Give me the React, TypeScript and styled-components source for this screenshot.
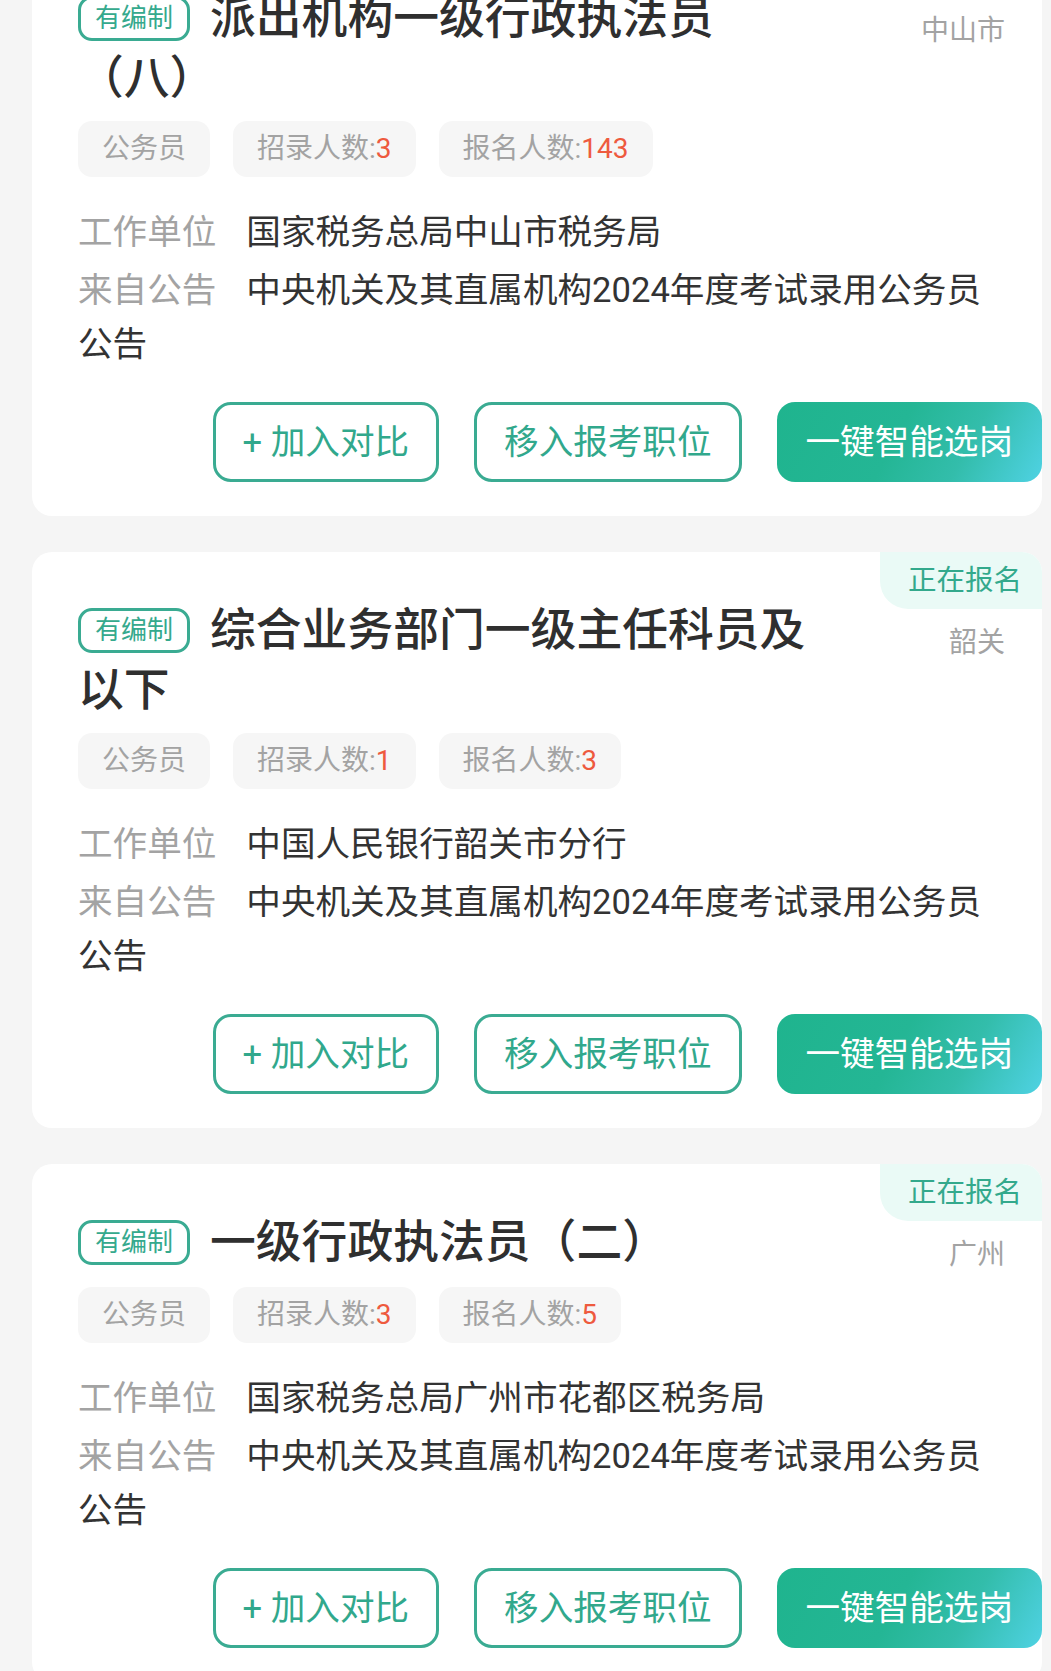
import React from 'react';
import styled, { createGlobalStyle } from 'styled-components';

const GlobalStyle = createGlobalStyle`
  html, body {
    margin: 0;
    padding: 0;
    background: #f5f5f5;
  }
  body {
    font-family: Roboto, 'Noto Sans CJK SC', 'Noto Sans', sans-serif;
    color: #333;
    overflow: hidden;
    text-spacing-trim: space-all;
  }
  * {
    box-sizing: border-box;
  }
`;

const List = styled.main`
  display: flex;
  flex-direction: column;
  gap: 36px;
  margin-top: -60px;
  padding: 0 9px 0 32px;
`;

const Card = styled.section`
  position: relative;
  background: #fff;
  border-radius: 20px;
  padding: 49px 0 34px 46px;
`;

const Status = styled.div`
  position: absolute;
  top: 0;
  right: 0;
  height: 57px;
  padding: 0 20px 0 28px;
  background: #eafaf6;
  border-radius: 0 20px 0 28px;
  color: #33a98c;
  font-size: 28.5px;
  line-height: 57px;
`;

const Header = styled.div`
  display: flex;
  align-items: flex-start;
  padding-right: 37px;
`;

const Title = styled.h2`
  flex: 1;
  max-width: 760px;
  margin: 0;
  font-size: 45.8px;
  line-height: 60px;
  font-weight: 500;
  color: #2f2f2f;
`;

const Tag = styled.span`
  display: inline-block;
  vertical-align: top;
  margin: 7px 20px 0 0;
  padding: 0 14px;
  border: 3px solid #3aab92;
  border-radius: 14px;
  color: #35a98d;
  font-size: 26px;
  line-height: 39px;
  font-weight: 400;
`;

const Location = styled.span`
  margin-left: auto;
  margin-top: 22px;
  white-space: nowrap;
  color: #a3a3a3;
  font-size: 28px;
  line-height: 40px;
`;

const Chips = styled.div`
  display: flex;
  gap: 23px;
  margin-top: 12px;
`;

const Chip = styled.span`
  height: 56px;
  padding: 0 24px;
  background: #f6f6f6;
  border-radius: 14px;
  color: #a3a3a3;
  font-size: 28px;
  line-height: 56px;
  white-space: nowrap;
`;

const Count = styled.span`
  color: #ee5a3e;
`;

const Info = styled.div`
  display: flex;
  flex-direction: column;
  gap: 4px;
  margin-top: 28px;
  padding-right: 37px;
`;

const InfoRow = styled.p`
  margin: 0;
  font-size: 34.6px;
  line-height: 54px;
  color: #333;
`;

const Label = styled.span`
  margin-right: 30px;
  color: #a3a3a3;
`;

const Actions = styled.div`
  display: flex;
  justify-content: flex-end;
  gap: 35px;
  margin-top: 31px;
`;

const Button = styled.button<{ $primary?: boolean }>`
  height: 80px;
  padding: 0 ${({ $primary }) => ($primary ? 29 : 27)}px;
  border: ${({ $primary }) => ($primary ? 'none' : '3px solid #3aab92')};
  border-radius: 18px;
  background: ${({ $primary }) =>
    $primary
      ? 'linear-gradient(118deg, #1fb48e 0%, #24b695 45%, #33bdab 70%, #4fd2e3 100%)'
      : '#fff'};
  color: ${({ $primary }) => ($primary ? '#fff' : '#31a88c')};
  font-family: inherit;
  font-size: 34.6px;
  line-height: 1;
  white-space: nowrap;
`;

type Job = {
  title: string;
  location: string;
  recruit: number;
  applied: number;
  unit: string;
  notice: string;
};

// \u200b lets the bracketed suffix wrap on its own, like the app does
const jobs: Job[] = [
  {
    title: '派出机构一级行政执法员\u200b（八）',
    location: '中山市',
    recruit: 3,
    applied: 143,
    unit: '国家税务总局中山市税务局',
    notice: '中央机关及其直属机构2024年度考试录用公务员公告',
  },
  {
    title: '综合业务部门一级主任科员及以下',
    location: '韶关',
    recruit: 1,
    applied: 3,
    unit: '中国人民银行韶关市分行',
    notice: '中央机关及其直属机构2024年度考试录用公务员公告',
  },
  {
    title: '一级行政执法员（二）',
    location: '广州',
    recruit: 3,
    applied: 5,
    unit: '国家税务总局广州市花都区税务局',
    notice: '中央机关及其直属机构2024年度考试录用公务员公告',
  },
];

function JobCard({ job }: { job: Job }): JSX.Element {
  return (
    <Card>
      <Status>正在报名</Status>
      <Header>
        <Title>
          <Tag>有编制</Tag>
          {job.title}
        </Title>
        <Location>{job.location}</Location>
      </Header>
      <Chips>
        <Chip>公务员</Chip>
        <Chip>
          招录人数:<Count>{job.recruit}</Count>
        </Chip>
        <Chip>
          报名人数:<Count>{job.applied}</Count>
        </Chip>
      </Chips>
      <Info>
        <InfoRow>
          <Label>工作单位</Label>
          {job.unit}
        </InfoRow>
        <InfoRow>
          <Label>来自公告</Label>
          {job.notice}
        </InfoRow>
      </Info>
      <Actions>
        <Button>+ 加入对比</Button>
        <Button>移入报考职位</Button>
        <Button $primary>一键智能选岗</Button>
      </Actions>
    </Card>
  );
}

export default function App(): JSX.Element {
  return (
    <>
      <GlobalStyle />
      <List>
        {jobs.map((job) => (
          <JobCard key={job.title} job={job} />
        ))}
      </List>
    </>
  );
}
